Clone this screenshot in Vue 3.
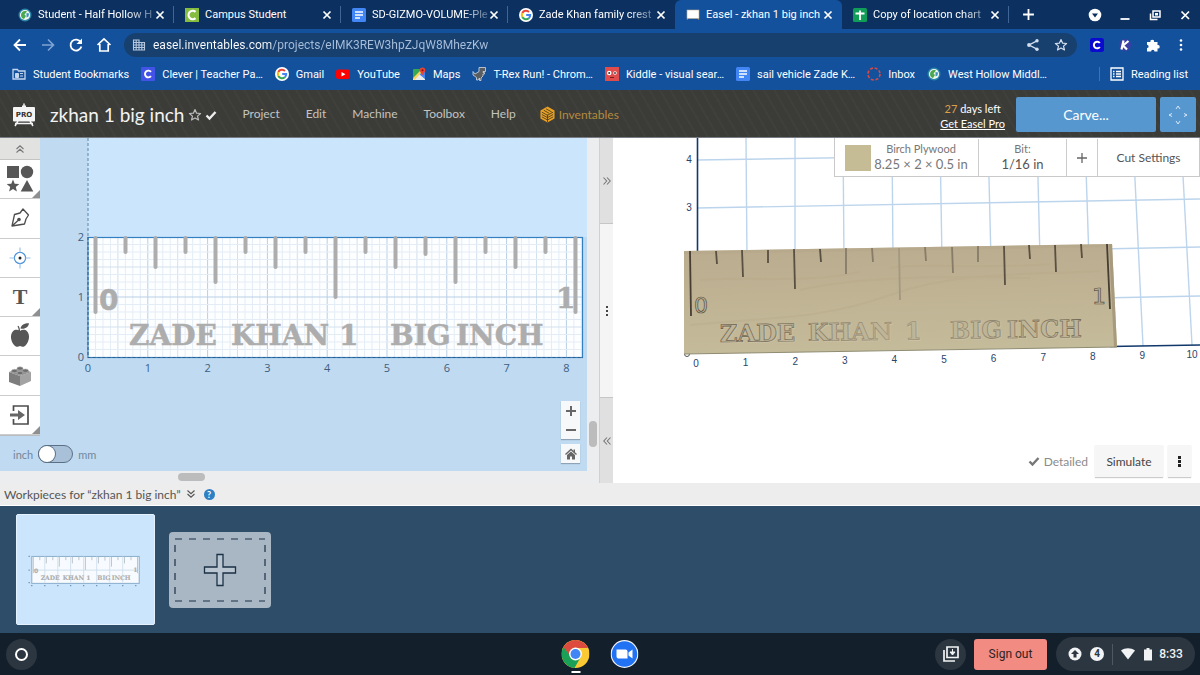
<script setup>
import { ref } from 'vue'

const tabs = [
  { title: 'Student - Half Hollow H', icon: 'i-globe', fade: true },
  { title: 'Campus Student', icon: 'i-campus' },
  { title: 'SD-GIZMO-VOLUME-Ple', icon: 'i-docs', fade: true },
  { title: 'Zade Khan family crest', icon: 'i-google', fade: true },
  { title: 'Easel - zkhan 1 big inch', icon: 'i-easel', active: true },
  { title: 'Copy of location chart', icon: 'i-sheets', fade: true }
]

const bookmarks = [
  { label: 'Student Bookmarks', icon: 'i-folder' },
  { label: 'Clever | Teacher Pa…', icon: 'i-clever' },
  { label: 'Gmail', icon: 'i-google' },
  { label: 'YouTube', icon: 'i-youtube' },
  { label: 'Maps', icon: 'i-maps' },
  { label: 'T-Rex Run! - Chrom…', icon: 'i-trex' },
  { label: 'Kiddle - visual sear…', icon: 'i-kiddle' },
  { label: 'sail vehicle Zade K…', icon: 'i-docs' },
  { label: 'Inbox', icon: 'i-inbox' },
  { label: 'West Hollow Middl…', icon: 'i-globe' }
]

const menu = ['Project', 'Edit', 'Machine', 'Toolbox', 'Help']

const tools = [
  { name: 'Shapes', icon: 't-shapes', more: true },
  { name: 'Pen', icon: 't-pen' },
  { name: 'Drill', icon: 't-target' },
  { name: 'Text', icon: 't-text', more: true },
  { name: 'Icons', icon: 't-apple' },
  { name: 'Apps', icon: 't-brick' },
  { name: 'Import', icon: 't-import', more: true }
]

const unit = 59.8
const minorX = Array.from({ length: 66 }, (_, i) => i + 1)
const minorY = Array.from({ length: 15 }, (_, i) => i + 1)
const inches = [0, 1, 2, 3, 4, 5, 6, 7, 8]
const tickEnds = [314, 254, 269, 254, 284, 254, 269, 254, 299, 254, 269, 256, 284, 254, 269, 254, 314]
const gridTone = (i) => (i % 8 === 0 ? '#b9cfe6' : i % 4 === 0 ? '#d3e0ee' : '#e4edf6')

const words = [
  { t: 'ZADE', x: 129 },
  { t: 'KHAN', x: 231 },
  { t: '1', x: 339 },
  { t: 'BIG', x: 390 },
  { t: 'INCH', x: 456 }
]

const woodTicks = [
  [690, 251, 691, 316], [716, 251, 717, 264], [742, 250, 743, 277], [768, 250, 768, 263],
  [794, 249, 795, 289], [820, 249, 821, 262], [846, 248, 846, 274], [872, 248, 873, 262],
  [899, 248, 900, 300], [925, 247, 926, 261], [952, 247, 953, 273], [978, 246, 978, 262],
  [1004, 246, 1005, 285], [1029, 245, 1030, 259], [1055, 245, 1056, 272], [1081, 244, 1082, 258],
  [1107, 244, 1110, 309]
]
const woodWords = [
  { t: 'ZADE', x: 720 },
  { t: 'KHAN', x: 808 },
  { t: '1', x: 905 },
  { t: 'BIG', x: 950 },
  { t: 'INCH', x: 1007 }
]
const bedLines = [
  [746, 138, 747, 260], [795, 138, 795, 260], [843, 138, 844, 260], [892, 138, 893, 260],
  [940, 138, 942, 260], [988, 138, 991, 260], [1037, 138, 1040, 260], [1085, 138, 1089, 260],
  [1133, 138, 1143, 346], [1181, 138, 1192, 345],
  [697, 160, 1200, 152], [697, 208, 1200, 199], [1100, 249, 1200, 247], [1100, 298, 1200, 296]
]
const bedLabels = inches.concat([9, 10]).map((n) => ({ n, x: 696 + n * 49.6, y: 367 - n * 0.9 }))

const metric = ref(false)
const url = ref('easel.inventables.com/projects/eIMK3REW3hpZJqW8MhezKw')
</script>

<template>
  <div class="screen">
    <svg class="sprite" aria-hidden="true">
      <symbol id="i-globe" viewBox="0 0 14 14">
        <circle cx="7" cy="7" r="6.500" fill="#2b86a8" />
        <circle cx="7" cy="7" r="5.100" fill="#f2f7ef" />
        <path d="M3 7c0-3 3-5 6-3.500L6.500 6.500 8 8l-2 3C4 10.500 3 9 3 7z" fill="#4aa84d" />
        <path d="M8.500 5l2.500.5-.5 3-2 1z" fill="#3a8fc4" />
      </symbol>
      <symbol id="i-campus" viewBox="0 0 14 14">
        <rect width="14" height="14" fill="#84bd3f" />
        <path d="M10.500 3.800A4.200 4.200 0 1 0 10.500 10.200" fill="none" stroke="#fff" stroke-width="2.200" />
      </symbol>
      <symbol id="i-docs" viewBox="0 0 14 14">
        <rect width="14" height="14" rx="1.500" fill="#4285f4" />
        <path d="M3 4h8M3 7h8M3 10h5" stroke="#fff" stroke-width="1.400" />
      </symbol>
      <symbol id="i-google" viewBox="0 0 14 14">
        <circle cx="7" cy="7" r="7" fill="#fff" />
        <g fill="none" stroke-width="2">
          <path d="M10 4A4.200 4.200 0 0 0 3.300 5" stroke="#ea4335" />
          <path d="M3.300 5a4.200 4.200 0 0 0 0 4" stroke="#fbbc05" />
          <path d="M3.300 9A4.200 4.200 0 0 0 9.800 10.200" stroke="#34a853" />
          <path d="M9.800 10.200A4.200 4.200 0 0 0 11.200 7H7.200" stroke="#4285f4" />
        </g>
      </symbol>
      <symbol id="i-easel" viewBox="0 0 14 14">
        <path d="M1 12l2-3M13 12l-2-3" stroke="#8b8175" />
        <rect x="1" y="2" width="12" height="8.500" fill="#fff" stroke="#b9a994" stroke-width=".6" />
      </symbol>
      <symbol id="i-sheets" viewBox="0 0 14 14">
        <rect width="14" height="14" rx="1.500" fill="#0f9d58" />
        <path d="M2.500 5.500h9M7 2.500v9.500" stroke="#fff" stroke-width="1.800" />
      </symbol>
      <symbol id="i-folder" viewBox="0 0 14 14">
        <path d="M1 2.500h4.500l1 1.500H13v8H1z" fill="none" stroke="#c5d7ef" stroke-width="1.300" />
        <path d="M3.500 6.500h3v4h-3zM8 6.500h3M8 9h3" fill="#c5d7ef" stroke="#c5d7ef" />
      </symbol>
      <symbol id="i-clever" viewBox="0 0 14 14">
        <rect width="14" height="14" rx="1" fill="#4353e8" />
        <path d="M10 4.800A3.400 3.400 0 1 0 10 9.200" fill="none" stroke="#fff" stroke-width="1.900" />
      </symbol>
      <symbol id="i-youtube" viewBox="0 0 14 14">
        <rect y="2.500" width="14" height="9.500" rx="2.200" fill="#f00" />
        <path d="M5.500 5v4.500l4-2.250z" fill="#fff" />
      </symbol>
      <symbol id="i-maps" viewBox="0 0 14 14">
        <rect x="1" y="2" width="12" height="11" rx="1" fill="#34a853" />
        <path d="M1 12L8 6l5 6v1H1z" fill="#e8eaed" />
        <path d="M7 7l6-4v9z" fill="#4285f4" />
        <path d="M1 11L9 3l1.500 1.500L2.500 13z" fill="#fbd55a" />
        <path d="M10.500 0.500a2.800 2.800 0 0 1 2.800 2.800c0 2-2 3-2.800 5-.8-2-2.800-3-2.800-5a2.800 2.800 0 0 1 2.800-2.800z" fill="#ea4335" />
        <circle cx="10.500" cy="3.300" r="1" fill="#811411" />
      </symbol>
      <symbol id="i-trex" viewBox="0 0 14 14">
        <path d="M7 .5h6.500v4H11v1h1.500V7H11v2L9 11v2.500H7.500V11L6 13H4.500v-2.500L1 8V4.500L3 7l4-2.500z" fill="#5a5d60" stroke="#d6dbe2" stroke-width=".8" />
      </symbol>
      <symbol id="i-kiddle" viewBox="0 0 14 14">
        <rect width="14" height="14" fill="#e04c4c" />
        <circle cx="4.200" cy="6" r="2.300" fill="#fff" /><circle cx="4.200" cy="6" r="1" fill="#333" />
        <circle cx="10" cy="6" r="1.800" fill="#fff" /><circle cx="10" cy="6" r=".9" fill="#333" />
        <path d="M5 10.500h4" stroke="#7c1d1d" />
      </symbol>
      <symbol id="i-inbox" viewBox="0 0 14 14">
        <circle cx="7" cy="7" r="6" fill="none" stroke="#d84a43" stroke-width="1.600" stroke-dasharray="3 1.700" />
      </symbol>
      <symbol id="t-shapes" viewBox="0 0 28 28">
        <g fill="#575757">
          <rect x="1" y="1" width="12" height="12" /><circle cx="21" cy="7" r="6.200" />
          <path d="M7 14.500l1.700 4.200 4.600.3-3.500 2.900 1.100 4.600L7 24l-3.900 2.500 1.100-4.600L.7 19l4.600-.3zM21 15l6.300 11.500H14.700z" />
        </g>
      </symbol>
      <symbol id="t-pen" viewBox="0 0 28 28">
        <path d="M6 22L8.500 10.500l5.500-1.500 3-4 5.500 6-2.500 4-1.500 5zM6 22l6-5.500" fill="none" stroke="#4d4d4d" stroke-width="1.300" stroke-linejoin="round" />
        <circle cx="13" cy="15.500" r="1.800" fill="#4d4d4d" />
      </symbol>
      <symbol id="t-target" viewBox="0 0 28 28">
        <circle cx="14" cy="14" r="5.600" fill="none" stroke="#4a90d9" stroke-width="1.200" />
        <path d="M3.500 14h5M19.500 14h5M14 3.500v5M14 19.500v5" stroke="#9cc3ea" stroke-width="1.200" />
        <circle cx="14" cy="14" r="1.500" fill="#222" />
      </symbol>
      <symbol id="t-apple" viewBox="0 0 28 28">
        <path d="M14 9c2-1.500 5-1.800 7 .2 3.500 3.800 2.200 10.300-1.500 14.300-1.800 1.800-3.500 1.300-5.500.6-2 .7-3.700 1.200-5.500-.6C4.800 19.500 3.500 13 7 9.200c2-2 5-1.700 7-.2z" fill="#575757" />
        <path d="M13.500 9c0-2-.5-3.500-1.500-5" fill="none" stroke="#575757" stroke-width="1.300" />
        <path d="M14.500 6.500C15 2.500 19 1 23 1.200 22.500 5 19 7.500 14.500 6.500z" fill="#575757" />
      </symbol>
      <symbol id="t-brick" viewBox="0 0 28 28">
        <path d="M3 10l11 4v10L3 20z" fill="#7d7d7d" /><path d="M14 14l11-4v9l-11 5z" fill="#a3a3a3" />
        <path d="M3 10l11-4 11 4-11 4z" fill="#8e8e8e" />
        <g fill="#6d6d6d" stroke="#b4b4b4" stroke-width=".6">
          <ellipse cx="8.500" cy="9" rx="3" ry="1.700" /><ellipse cx="14" cy="6.500" rx="3" ry="1.700" />
          <ellipse cx="14" cy="11" rx="3" ry="1.700" /><ellipse cx="19.500" cy="8.700" rx="3" ry="1.700" />
        </g>
      </symbol>
      <symbol id="t-import" viewBox="0 0 28 28">
        <path d="M7.500 10V5H22v18H7.500v-5" fill="none" stroke="#4d4d4d" stroke-width="1.700" />
        <path d="M4 12.500h8V9l7 5-7 5v-3.500H4z" fill="#666" />
      </symbol>
      <symbol id="s-check" viewBox="0 0 12 12">
        <path d="M1.500 6.500l3 3L10.500 3" fill="none" stroke="currentColor" stroke-width="2.400" />
      </symbol>
      <symbol id="s-star" viewBox="0 0 14 14">
        <path d="M7 1.500l1.600 3.700 4 .3-3.100 2.600 1 3.900L7 9.900 3.500 12l1-3.900L1.400 5.500l4-.3z" fill="none" stroke="currentColor" stroke-width="1.200" stroke-linejoin="round" />
      </symbol>
      <symbol id="s-x" viewBox="0 0 12 12">
        <path d="M2.500 2.500l7 7M9.500 2.500l-7 7" stroke="currentColor" stroke-width="1.700" />
      </symbol>
      <symbol id="s-chev" viewBox="0 0 10 10">
        <path d="M1.500 5L5 1.800 8.500 5M1.500 8.500L5 5.300l3.500 3.200" fill="none" stroke="currentColor" stroke-width="1.100" />
      </symbol>
    </svg>

    <header class="browser">
      <div class="tabstrip">
        <div v-for="t in tabs" :key="t.title" class="tab" :class="{ active: t.active, fade: t.fade }">
          <svg class="ico"><use :href="'#' + t.icon" /></svg>
          <button class="tab-title">{{ t.title }}</button>
          <button class="tab-close" aria-label="Close tab"><svg><use href="#s-x" /></svg></button>
        </div>
        <button class="newtab" aria-label="New tab">
          <svg viewBox="0 0 12 12"><path d="M6 1v10M1 6h10" stroke="#fff" stroke-width="1.700" /></svg>
        </button>
        <div class="winbtns">
          <button aria-label="Search tabs">
            <svg viewBox="0 0 14 14"><circle cx="7" cy="7" r="6.300" fill="#fff" /><path d="M4 5.500h6L7 9.500z" fill="#0c3160" /></svg>
          </button>
          <button aria-label="Minimize"><svg viewBox="0 0 14 14"><path d="M2.500 11h9" stroke="#fff" stroke-width="1.800" /></svg></button>
          <button aria-label="Restore">
            <svg viewBox="0 0 14 14"><path d="M5 3h7v6H5zM2.500 5.500v6h7" fill="none" stroke="#fff" stroke-width="1.500" /><path d="M7 5h3v2.500H7z" fill="#fff" /></svg>
          </button>
          <button aria-label="Close window"><svg viewBox="0 0 14 14"><path d="M3.500 3.500l7.500 7.500M11 3.500L3.500 11" stroke="#fff" stroke-width="1.700" /></svg></button>
        </div>
      </div>

      <div class="toolbar">
        <button aria-label="Back"><svg viewBox="0 0 16 16"><path d="M14 8H3M8 2.500L2.500 8 8 13.500" fill="none" stroke="#fff" stroke-width="1.800" /></svg></button>
        <button aria-label="Forward"><svg viewBox="0 0 16 16"><path d="M2 8h11M8 2.500L13.500 8 8 13.500" fill="none" stroke="#7fa4d2" stroke-width="1.600" /></svg></button>
        <button aria-label="Reload"><svg viewBox="0 0 16 16"><path d="M12.800 5.200A5.500 5.500 0 1 0 13.400 9.500" fill="none" stroke="#fff" stroke-width="1.800" /><path d="M14 1.500V7H8.500z" fill="#fff" /></svg></button>
        <button aria-label="Home"><svg viewBox="0 0 16 16"><path d="M1.500 8L8 1.800 14.500 8M3.800 7v7h8.400V7" fill="none" stroke="#fff" stroke-width="1.700" /></svg></button>
        <div class="omnibox">
          <svg viewBox="0 0 14 14" class="ico"><path d="M1.500 2h5.500v10H1.500zM7 4.500h5.500V12H7M1.500 4.500H7M1.500 7h11M1.500 9.500h11M4.200 2v10M9.800 4.500V12" fill="none" stroke="#b5c8e0" stroke-width="1.100" /></svg>
          <input v-model="url" aria-label="Address" spellcheck="false" />
          <button aria-label="Share"><svg viewBox="0 0 14 14"><path d="M11 2.800L3 7l8 4.200" fill="none" stroke="#d3dfee" stroke-width="1.300" /><g fill="#d3dfee"><circle cx="11" cy="2.800" r="1.700" /><circle cx="3" cy="7" r="1.900" /><circle cx="11" cy="11.200" r="1.700" /></g></svg></button>
          <button aria-label="Bookmark" class="star"><svg><use href="#s-star" /></svg></button>
        </div>
        <button aria-label="Clever extension" class="ext"><svg viewBox="0 0 14 14"><rect width="14" height="14" rx="2.500" fill="#0b0bd0" /><path d="M9.800 5A3.300 3.300 0 1 0 9.800 9" fill="none" stroke="#fff" stroke-width="2" /></svg></button>
        <button aria-label="Kami extension" class="ext"><svg viewBox="0 0 14 14"><circle cx="7" cy="7" r="6" fill="#3d3fa5" /><path d="M5.500 2.500l-2 9M10.500 3L5 7.500l4 4" fill="none" stroke="#fff" stroke-width="2.200" /></svg></button>
        <button aria-label="Extensions" class="ext"><svg viewBox="0 0 14 14"><path d="M1 4h3.500a1.800 1.800 0 1 1 3.500 0H11.500v3a1.800 1.800 0 1 1 0 3.500V13.500H8.500a1.700 1.700 0 1 0-3.400 0H1V10a1.600 1.600 0 1 0 0-3.200z" fill="#fff" /></svg></button>
        <button aria-label="Browser menu" class="ext"><svg viewBox="0 0 14 14" fill="#fff"><circle cx="7" cy="2.500" r="1.300" /><circle cx="7" cy="7" r="1.300" /><circle cx="7" cy="11.500" r="1.300" /></svg></button>
      </div>

      <nav class="bookmarks">
        <a v-for="b in bookmarks" :key="b.label" href="#"><svg class="ico"><use :href="'#' + b.icon" /></svg>{{ b.label }}</a>
        <button class="reading">
          <svg class="ico" viewBox="0 0 14 14"><path d="M1 1h12v12H1zM3 4.500h1.500M3 7h1.500M3 9.500h1.500M6 4.500h5M6 7h5M6 9.500h5" fill="none" stroke="#fff" stroke-width="1.300" /></svg>
          Reading list
        </button>
      </nav>
    </header>

    <header class="easel">
      <svg class="logo" viewBox="0 0 24 24">
        <path d="M12 0.500v4M6 18l-3 5M18 18l3 5M3 20.500h18" stroke="#f4f4f4" stroke-width="1.500" fill="none" />
        <path d="M10 2.500h4v2h-4z" fill="#f4f4f4" />
        <rect x="1" y="4" width="22" height="14.500" rx="1" fill="#f4f4f4" />
        <text x="12" y="14" text-anchor="middle" class="logo-text">PRO</text>
      </svg>
      <h1>zkhan 1 big inch</h1>
      <svg class="h-star"><use href="#s-star" /></svg>
      <svg class="h-check"><use href="#s-check" /></svg>
      <nav>
        <a v-for="m in menu" :key="m" href="#">{{ m }}</a>
        <a href="#" class="inv">
          <svg viewBox="0 0 16 18"><path d="M8 .5l7.500 4.200v8.600L8 17.500.5 13.300V4.700z" fill="#e9a023" /><path d="M2 6.500l6 3.300 6-3.300M2 9l6 3.300L14 9M2 11.500l6 3.300 6-3.300M4 4.500l6 3.300M6.500 3l6 3.300M8 9v8" fill="none" stroke="#453a22" stroke-width=".9" /></svg>Inventables</a>
      </nav>
      <div class="trial"><span><b>27</b> days left</span><a href="#">Get Easel Pro</a></div>
      <button class="carve">Carve...</button>
      <button class="jog" aria-label="Jog machine">
        <svg viewBox="0 0 20 20"><path d="M8 4l2-3 2 3M8 16l2 3 2-3M4 8.500L1 10l3 1.500M16 8.500l3 1.500-3 1.500" fill="none" stroke="#d8e9f8" stroke-width="1" /></svg>
      </button>
    </header>

    <main class="work">
      <section class="editor">
        <div class="canvas">
          <svg class="drawing" viewBox="0 138 587 333" preserveAspectRatio="xMinYMin slice">
            <rect x="0" y="138" width="587" height="333" fill="#c0daf1" />
            <rect x="88" y="138" width="499" height="99" fill="#cbe5fd" />
            <rect x="88" y="237" width="495" height="120" fill="#fdfeff" />
            <g stroke-width="1">
              <line v-for="i in minorX" :key="'x' + i" :x1="88 + i * unit / 8" :x2="88 + i * unit / 8" y1="238" y2="357" :stroke="gridTone(i)" />
              <line v-for="i in minorY" :key="'y' + i" x1="88" x2="583" :y1="357 - i * 7.5" :y2="357 - i * 7.5" :stroke="gridTone(i)" />
            </g>
            <path d="M88 138v99" stroke="#5a86ab" stroke-dasharray="3 2" />
            <rect x="88" y="237.500" width="494.500" height="120" fill="none" stroke="#3380c0" stroke-width="1.200" />
            <path d="M88 237v120.500h495" fill="none" stroke="#2a5f8e" stroke-dasharray="3 2" />
            <line v-for="(e, i) in tickEnds" :key="'t' + i" :x1="95.5 + i * 30" :x2="95.5 + i * 30" y1="238" :y2="e - 2" stroke="#adadad" stroke-width="4" stroke-linecap="round" />
            <g class="slab">
              <text v-for="w in words" :key="w.t" :x="w.x" y="345">{{ w.t }}</text>
              <text x="99" y="310" class="zero">0</text>
              <text x="556" y="308">1</text>
            </g>
            <g class="axis">
              <text v-for="n in inches" :key="n" :x="88 + n * unit" y="372" text-anchor="middle">{{ n }}</text>
              <text v-for="n in 3" :key="'v' + n" x="84" :y="361 - (n - 1) * 60" text-anchor="end">{{ n - 1 }}</text>
            </g>
          </svg>

          <div class="toolbox">
            <button class="collapse" aria-label="Collapse tools"><svg><use href="#s-chev" /></svg></button>
            <button v-for="t in tools" :key="t.name" :aria-label="t.name" class="tool" :class="{ more: t.more }">
              <span v-if="t.icon === 't-text'" class="tee">T</span>
              <svg v-else><use :href="'#' + t.icon" /></svg>
            </button>
          </div>

          <div class="units">
            <label for="unit-switch">inch</label>
            <input id="unit-switch" v-model="metric" type="checkbox" role="switch" />
            <label for="unit-switch">mm</label>
          </div>

          <div class="zoomer">
            <div class="pair">
              <button aria-label="Zoom in"><svg viewBox="0 0 10 10"><path d="M5 0v10M0 5h10" stroke="#666" stroke-width="2" /></svg></button>
              <button aria-label="Zoom out"><svg viewBox="0 0 10 10"><path d="M0 5h10" stroke="#666" stroke-width="2" /></svg></button>
            </div>
            <button class="home" aria-label="Reset view"><svg viewBox="0 0 12 12"><path d="M0.500 6.500L6 1.500l5.500 5" fill="none" stroke="#666" stroke-width="1.400" /><path d="M2 7l4-3.500L10 7v4.500H7V8.500H5v3H2zM8.500 1.500h1.500v3l-1.500-1.300z" fill="#666" /></svg></button>
          </div>
        </div>
        <div class="vbar"><i></i></div>
        <div class="hbar"><i></i></div>
      </section>

      <div class="split">
        <button aria-label="Expand editor" class="right"><svg><use href="#s-chev" /></svg></button>
        <div class="grip"><i></i><i></i><i></i></div>
        <button aria-label="Expand preview" class="left"><svg><use href="#s-chev" /></svg></button>
      </div>

      <section class="preview">
        <svg class="drawing" viewBox="613 138 587 345" preserveAspectRatio="xMinYMin slice">
          <defs>
            <linearGradient id="wood" x1="0" y1="0" x2="0.100" y2="1">
              <stop offset="0" stop-color="#baab8e" />
              <stop offset="1" stop-color="#c4bb9a" />
            </linearGradient>
            <linearGradient id="groove" gradientUnits="userSpaceOnUse" x1="690" y1="0" x2="1110" y2="0">
              <stop offset="0" stop-color="#5a5040" />
              <stop offset=".5" stop-color="#a0957c" />
              <stop offset="1" stop-color="#6d634f" />
            </linearGradient>
          </defs>
          <g stroke="#bcd5ec" stroke-width="1.400">
            <line v-for="(l, i) in bedLines" :key="i" :x1="l[0]" :y1="l[1]" :x2="l[2]" :y2="l[3]" />
          </g>
          <path d="M697.500 138v114M1110 346.500l90-1.500" stroke="#12386b" stroke-width="1.600" />
          <circle cx="687" cy="354" r="2.500" fill="#fff" stroke="#555" />
          <path d="M684 251l428-7 5 103-433 7z" fill="url(#wood)" />
          <path d="M684 251l428-7 .5 3-428 7z" fill="#b3a587" opacity=".5" />
          <path d="M690 325c80-8 130-5 200-30s150-20 210-24M800 290c60-14 150-14 230-12M890 268c30-6 90 2 160-4M700 280c70-4 100 4 160-8" fill="none" stroke="#ada07f" opacity=".2" stroke-width="2" />
          <path d="M1112 244l5 103-3 .2-5-103z" fill="#a89b7d" />
          <path d="M684 354l433-7" stroke="#8f8c73" />
          <g stroke-width="1.800">
            <line v-for="(l, i) in woodTicks" :key="i" :x1="l[0]" :y1="l[1]" :x2="l[2]" :y2="l[3]" :stroke="i === 8 ? '#a39880' : i % 16 === 0 ? '#463e33' : i > 5 && i < 12 ? '#877c68' : '#5a5042'" />
          </g>
          <g class="carved light" transform="rotate(-0.8 720 342)">
            <text v-for="w in woodWords" :key="w.t" :x="w.x + 1" y="343">{{ w.t }}</text>
          </g>
          <g class="carved" transform="rotate(-0.8 720 342)">
            <text v-for="w in woodWords" :key="w.t" :x="w.x" y="342">{{ w.t }}</text>
          </g>
          <g class="carved digits">
            <text x="694" y="313">0</text>
            <text x="1092" y="304">1</text>
          </g>
          <g class="bed">
            <text v-for="l in bedLabels" :key="l.n" :x="l.x" :y="l.y" text-anchor="middle">{{ l.n }}</text>
            <text x="689" y="163" text-anchor="middle">4</text>
            <text x="689" y="211" text-anchor="middle">3</text>
          </g>
        </svg>

        <div class="setup">
          <button class="material"><i></i><span><small>Birch Plywood</small>8.25 × 2 × 0.5 in</span></button>
          <button class="bit"><small>Bit:</small>1/16 in</button>
          <button class="plus" aria-label="Add bit"><svg viewBox="0 0 12 12"><path d="M6 1v10M1 6h10" stroke="#666" stroke-width="1.300" /></svg></button>
          <button class="cut">Cut Settings</button>
        </div>

        <div class="sim">
          <span class="detail"><svg><use href="#s-check" /></svg>Detailed</span>
          <button class="simulate">Simulate</button>
          <button class="dots" aria-label="More options"><i></i><i></i><i></i></button>
        </div>
      </section>
    </main>

    <div class="wp-bar">
      Workpieces for “zkhan 1 big inch”
      <svg class="chev"><use href="#s-chev" /></svg>
      <button class="help" aria-label="Help">?</button>
    </div>

    <section class="pieces">
      <button class="piece" aria-label="Workpiece 1">
        <svg viewBox="0 152 631 290">
          <rect x="68" y="237" width="495" height="124" fill="#f7fbff" stroke="#8fb2cf" stroke-width="5" />
          <g transform="translate(-20 0)">
            <path d="M88 300h495M208 237v120M327 237v120M447 237v120M148 237v120M267 237v120M387 237v120M507 237v120" stroke="#cddcea" stroke-width="4" />
            <line v-for="(e, i) in tickEnds" :key="i" :x1="95 + i * 30" :x2="95 + i * 30" y1="238" :y2="e" stroke="#b4bcc4" stroke-width="4" />
            <g class="slab"><text v-for="w in words" :key="w.t" :x="w.x" y="346">{{ w.t }}</text><text x="98" y="312" class="zero">0</text><text x="556" y="310">1</text></g>
            <path d="M88 368v6M148 368v6M208 368v6M267 368v6M327 368v6M387 368v6M447 368v6M507 368v6M567 368v6M73 237h6M73 300h6M73 357h6" stroke="#6c93b5" stroke-width="6" />
          </g>
        </svg>
      </button>
      <button class="add" aria-label="Add workpiece">
        <svg viewBox="0 0 102 76">
          <path d="M6 7h90M6 69h90" stroke="#1b3146" stroke-width="1.200" stroke-dasharray="7 7" />
          <path d="M6 7v62M96 7v62" stroke="#1b3146" stroke-width="1.200" stroke-dasharray="7 7" stroke-dashoffset="-6" />
          <path d="M48 22.500h6v12.500h12.500v6H54v12.500h-6V41H35.500v-6H48z" fill="#b9c5d1" stroke="#1b3146" stroke-width="1.300" />
        </svg>
      </button>
    </section>

    <footer class="shelf">
      <button class="launcher" aria-label="Launcher"><i></i></button>
      <div class="apps">
        <button aria-label="Chrome" class="running">
          <svg viewBox="0 0 28 28">
            <circle cx="14" cy="14" r="14" fill="#fbc934" />
            <path d="M1.900 7A14 14 0 0 1 26.100 7L26.100 8H14L8 17.500z" fill="#dd4b3e" />
            <path d="M1.900 7A14 14 0 0 0 13 28l6.500-11.500-11-1z" fill="#1ba057" />
            <circle cx="14" cy="14" r="6.400" fill="#fff" /><circle cx="14" cy="14" r="5" fill="#4285f4" />
          </svg>
        </button>
        <button aria-label="Zoom">
          <svg viewBox="0 0 28 28"><circle cx="14" cy="14" r="13.300" fill="#2173f3" stroke="#f0f4fa" stroke-width="1.200" /><path d="M6 9.500h9a2 2 0 0 1 2 2v7H8a2 2 0 0 1-2-2zM18 12.500l4-3v9l-4-3z" fill="#fff" /></svg>
        </button>
      </div>
      <button class="tote" aria-label="Holding space">
        <svg viewBox="0 0 18 18"><path d="M5 2h11v10.500H5zM2 5v11h11" fill="none" stroke="#f1f3f4" stroke-width="1.700" /><path d="M10.500 4v4M8 7h5l-2.500 3z" fill="#f1f3f4" stroke="#f1f3f4" /></svg>
      </button>
      <button class="signout">Sign out</button>
      <button class="tray">
        <svg viewBox="0 0 14 14"><circle cx="7" cy="7" r="6.500" fill="#f1f3f4" /><path d="M7 3l4 4H8.500v3.500h-3V7H3z" fill="#2b3641" /></svg>
        <span class="count">4</span>
        <span class="bar"></span>
        <svg viewBox="0 0 14 14"><path d="M0 3.500C4 .5 10 .5 14 3.500L7 12.500z" fill="#f1f3f4" /></svg>
        <svg class="batt" viewBox="0 0 8 14"><path d="M2.500 1h3v1.500H8V13.500H0V2.500h2.500z" fill="#f1f3f4" /></svg>
        <time>8:33</time>
      </button>
    </footer>
  </div>
</template>

<style>
body { background: #131f2b; }
</style>

<style scoped>
* { box-sizing: border-box; }
.screen { min-height: 100vh; display: flex; flex-direction: column; font-family: Lato, sans-serif; color: #555; overflow: hidden; }
.sprite { position: absolute; width: 0; height: 0; }
button { font: inherit; color: inherit; background: none; border: 0; padding: 0; display: flex; align-items: center; justify-content: center; }
a { color: inherit; text-decoration: none; }
svg { display: block; flex: none; }
.ico { width: 14px; height: 14px; }

.browser { font-family: Roboto, sans-serif; font-size: 11px; color: #fff; background: #13519d; }
.tabstrip { display: flex; height: 29px; background: #0c3160; padding-left: 7px; }
.tab { flex: 0 1 167px; min-width: 0; display: flex; align-items: center; padding: 0 8px 0 11px; position: relative; }
.tab::after { content: ''; position: absolute; right: 0; top: 6px; width: 1px; height: 17px; background: #3f6697; }
.tab:nth-child(4)::after, .tab.active::after { display: none; }
.tab.active { background: #13519d; border-radius: 6px 6px 0 0; }
.tab-title { flex: 1; min-width: 0; white-space: nowrap; justify-content: flex-start; padding-left: 6px; }
.fade .tab-title { mask-image: linear-gradient(90deg, #000 78%, #0004); }
.tab-close svg { width: 12px; height: 12px; }
.newtab { width: 38px; }
.newtab svg { width: 13px; height: 13px; }
.winbtns { margin-left: auto; display: flex; gap: 16px; padding-right: 8px; }
.winbtns svg { width: 14px; height: 14px; }

.toolbar { height: 32px; display: flex; align-items: center; gap: 12px; padding: 0 11px 0 12px; }
.toolbar svg { width: 16px; height: 16px; }
.omnibox { flex: 1; height: 24px; border-radius: 12px; background: #18406f; display: flex; align-items: center; gap: 7px; padding: 0 9px 0 8px; }
.omnibox .ico, .omnibox button svg, .ext svg { width: 14px; height: 14px; }
.omnibox input { flex: 1; min-width: 0; border: 0; padding: 0; outline: 0; font: 12px Roboto, sans-serif; color: transparent; background: linear-gradient(90deg, #fff 118px, #a9bfdb 118px); background-clip: text; -webkit-background-clip: text; }
.omnibox .star { margin-left: 7px; color: #d3dfee; }
.ext { width: 16px; }

.bookmarks { height: 29px; display: flex; align-items: center; gap: 12px; padding: 0 12px 3px; }
.bookmarks a, .reading { display: flex; align-items: center; gap: 7px; white-space: nowrap; }
.reading { margin-left: auto; padding-left: 10px; border-left: 1px solid #3f73b5; }

.easel { height: 48px; flex: none; display: flex; align-items: center; padding: 2px 4px 0 12px; color: #ddd; background: repeating-linear-gradient(60deg, #ffffff05 0 2px, transparent 2px 9px), #3b3c38; border-bottom: 1px solid #777c82; font-size: 12px; }
.logo { width: 24px; height: 24px; }
.logo-text { font: bold 7px "DejaVu Sans", sans-serif; fill: #333; }
h1 { margin: 0 4px 0 14px; font-size: 19px; font-weight: 400; color: #f3f3f3; white-space: nowrap; line-height: 24px; }
.h-star { width: 14px; height: 14px; color: #bbb; }
.h-check { width: 12px; height: 12px; margin-left: 3px; color: #eee; }
.easel nav { display: flex; gap: 26px; margin-left: 25px; color: #c4c4c1; }
.inv { display: flex; align-items: center; gap: 4px; color: #b58a3c; margin-left: -2px; }
.inv svg { width: 15px; height: 17px; }
.trial { margin-left: auto; display: flex; flex-direction: column; align-items: center; font-size: 11px; line-height: 15px; color: #fff; margin-right: 11px; padding-top: 3px; }
.trial b { font-weight: 400; color: #dba04a; }
.trial a { text-decoration: underline; }
.carve { width: 140px; height: 35px; border-radius: 2px; background: #5797d0; color: #fff; font-size: 14px; margin-right: 4px; }
.jog { width: 36px; height: 35px; border-radius: 2px; background: #5797d0; }
.jog svg { width: 20px; height: 20px; }

.work { flex: 1; display: flex; min-height: 345px; background: #fff; }
.editor { flex: 599; min-width: 0; display: grid; grid-template-columns: 1fr 12px; grid-template-rows: 1fr 12px; background: #ecedee; }
.canvas { position: relative; overflow: hidden; }
.drawing { position: absolute; inset: 0; width: 100%; height: 100%; }
.slab { font: bold 28px "DejaVu Serif", serif; fill: #adadad; stroke: #adadad; stroke-width: 0.5; }
.zero { font-family: "DejaVu Sans", sans-serif; }
.axis { font: 11px "Open Sans", sans-serif; fill: #3d6080; }
.toolbox { position: relative; width: 40px; height: 298px; display: flex; flex-direction: column; border-bottom: 1px solid #b8bdc2; }
.collapse { height: 22px; background: #e2e2e1; color: #777; border-bottom: 1px solid #c4c4c4; }
.collapse svg, .split button svg, .chev { width: 10px; height: 10px; }
.tool { flex: 1; background: #fff; border-bottom: 1px solid #ccc; position: relative; }
.tool svg { width: 28px; height: 28px; }
.tee { font: bold 22px "Liberation Serif", serif; color: #555; }
.more::after { content: ''; position: absolute; right: 0; bottom: 0; border: 4px solid #8f8f8f; border-left-color: transparent; border-top-color: transparent; }
.units { position: absolute; left: 13px; bottom: 8px; display: flex; align-items: center; gap: 5px; font-size: 11px; color: #73879a; }
.units input { appearance: none; margin: 0; width: 35px; height: 18px; border: 1px solid #5b7085; border-radius: 9px; background: #a9c1d8; display: flex; }
.units input::before { content: ''; width: 16px; height: 16px; border-radius: 50%; background: #fff; box-shadow: 0 0 0 1px #5b7085; }
.units input:checked::before { margin-left: auto; }
.zoomer { position: absolute; right: 7px; bottom: 8px; width: 19px; display: flex; flex-direction: column; gap: 5px; }
.zoomer svg { width: 10px; height: 10px; }
.zoomer button { width: 19px; height: 19px; }
.zoomer .home svg { width: 12px; height: 12px; }
.pair, .home { background: #f7f8f9; box-shadow: 0 1px 1px #8fa3b6; }
.vbar { position: relative; }
.vbar i { position: absolute; bottom: 24px; left: 2px; width: 8px; height: 26px; border-radius: 4px; background: #bcbcbc; }
.hbar { grid-column: 1 / 3; display: flex; justify-content: center; align-items: center; padding-right: 216px; }
.hbar i { width: 27px; height: 8px; border-radius: 4px; background: #bcbcbc; }
.split { width: 14px; display: flex; flex-direction: column; background: #f5f5f5; border-left: 1px solid #d0d0d0; color: #777; }
.split button { flex: 0 0 86px; background: #e0e0e0; border: solid #c6c6c6; border-width: 0 0 1px; }
.split .left { border-width: 1px 0 0; }
.right svg { transform: rotate(90deg); }
.left svg { transform: rotate(-90deg); }
.grip, .dots { display: flex; flex-direction: column; align-items: center; justify-content: center; gap: 2px; }
.grip { flex: 1; }
.grip i, .dots i { width: 2px; height: 2px; background: #444; }

.preview { flex: 587; min-width: 0; position: relative; overflow: hidden; }
.carved { font: bold 24px "DejaVu Serif", serif; fill: #beb497; stroke: url(#groove); stroke-width: 0.7; }
.carved.light { stroke: #cdc3a6; }
.carved.digits { font-family: "DejaVu Sans", sans-serif; font-size: 22px; font-weight: 400; stroke: #5a5040; }
.bed { font: 10px "Liberation Sans", sans-serif; fill: #2b4468; }
.setup { position: absolute; top: 0; right: 0; display: flex; height: 39px; padding-top: 1px; background: #fff; border: solid #c9c9c9; border-width: 0 1px 1px; color: #777; font-size: 14px; line-height: 17px; }
.setup button + button { border-left: 1px solid #ccc; }
.setup small { display: block; font-size: 11px; line-height: 14px; }
.material { width: 143px; gap: 3px; font-size: 13px; }
.material i { width: 26px; height: 26px; background: #c5bc96; }
.material span { text-align: center; }
.bit { width: 88px; flex-direction: column; color: #555; font-size: 13px; }
.bit small { color: #777; }
.plus { width: 31px; }
.plus svg { width: 12px; height: 12px; }
.cut { width: 102px; font-size: 12px; color: #555; }
.sim { position: absolute; right: 9px; bottom: 6px; display: flex; align-items: center; gap: 5px; font-size: 12px; color: #444; }
.detail { display: flex; align-items: center; gap: 4px; color: #8b8b8b; margin-right: 2px; }
.detail svg { width: 12px; height: 12px; color: #777; }
.simulate, .dots { background: #f6f6f6; height: 32px; box-shadow: 0 1px 1px #ccc; }
.simulate { width: 68px; }
.dots { width: 23px; gap: 1px; }
.dots i { width: 3px; height: 3px; background: #222; }

.wp-bar { height: 23px; flex: none; display: flex; align-items: center; gap: 5px; padding-left: 4px; background: #ededed; border-bottom: 1px solid #fff; font-size: 12px; color: #555; }
.chev { transform: rotate(180deg); }
.help { width: 11px; height: 11px; margin-left: 3px; border-radius: 50%; background: #2f7fc4; color: #fff; font-size: 9px; font-weight: 700; }

.pieces { height: 127px; flex: none; display: flex; align-items: center; gap: 14px; padding: 0 16px; background: #2e4d69; }
.piece { width: 139px; height: 111px; background: #cbe5fd; border-radius: 2px; border: 1px solid #e4f2ff; }
.piece svg { width: 137px; height: 63px; }
.add { width: 102px; height: 76px; background: #a9b6c3; border-radius: 4px; }
.add svg { width: 102px; height: 76px; }

.shelf { height: 42px; flex: none; display: flex; align-items: center; padding: 0 5px 0 6px; background: #131f2b; position: relative; font: 12px Roboto, sans-serif; color: #f1f3f4; }
.launcher, .tote { width: 31px; height: 31px; border-radius: 50%; background: #2b3641; }
.launcher i { width: 13px; height: 13px; border: 2px solid #fff; border-radius: 50%; }
.apps { position: absolute; left: 50%; transform: translateX(-50%); display: flex; gap: 21px; }
.apps svg { width: 28px; height: 28px; }
.running { position: relative; }
.running::after { content: ''; position: absolute; bottom: -5px; width: 9px; height: 2px; background: #fff; }
.tote { margin-left: auto; }
.tote svg { width: 18px; height: 18px; }
.signout { width: 73px; height: 31px; margin: 0 9px 0 8px; border-radius: 3px; background: #f28b82; color: #2b2322; }
.tray { height: 34px; width: 139px; border-radius: 17px; background: #2b3641; gap: 8px; font-weight: 500; }
.tray svg { width: 14px; height: 14px; }
.tray .batt { width: 8px; margin: 0 -1px 0 1px; }
.count { width: 14px; height: 14px; border-radius: 50%; background: #f1f3f4; color: #2b3641; font-size: 10px; font-weight: 700; line-height: 14px; text-align: center; }
.bar { width: 1px; height: 21px; background: #4d5862; }
</style>
